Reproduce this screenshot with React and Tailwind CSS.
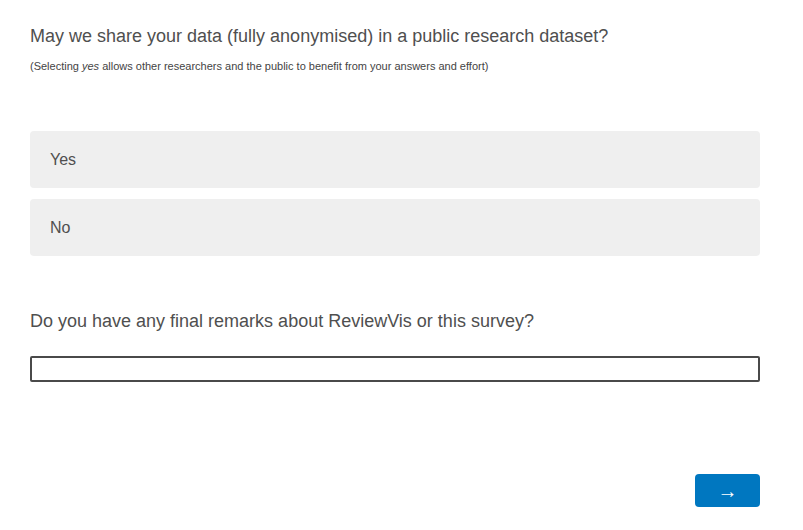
export default function App() {
  return (
    <div className="w-[803px] h-[530px] bg-white font-['Liberation_Sans',Arial,sans-serif] text-[#4f4f4f] pl-[30px] pr-[43px] pt-[24px] flex flex-col">
      <h2 className="text-[18px] leading-[24px]">
        May we share your data (fully anonymised) in a public research dataset?
      </h2>
      <p className="text-[11px] leading-[13px] mt-[12px] text-[#444]">
        (Selecting <em>yes</em> allows other researchers and the public to benefit from your answers and effort)
      </p>

      <div className="mt-[58px] flex flex-col gap-[11px]">
        <div className="h-[57px] bg-[#efefef] rounded-[4px] px-[20px] flex items-center text-[16px]">Yes</div>
        <div className="h-[57px] bg-[#efefef] rounded-[4px] px-[20px] flex items-center text-[16px]">No</div>
      </div>

      <h2 className="text-[18px] leading-[24px] mt-[53px]">
        Do you have any final remarks about ReviewVis or this survey?
      </h2>
      <input
        type="text"
        className="mt-[23px] h-[26px] w-full border-2 border-[#4a4a4a] rounded-[2px] outline-none px-2"
      />

      <div className="mt-auto mb-[23px] flex justify-end">
        <button className="w-[65px] h-[33px] bg-[#0077c0] rounded-[4px] text-white text-[20px] leading-none flex items-center justify-center">
          →
        </button>
      </div>
    </div>
  );
}
